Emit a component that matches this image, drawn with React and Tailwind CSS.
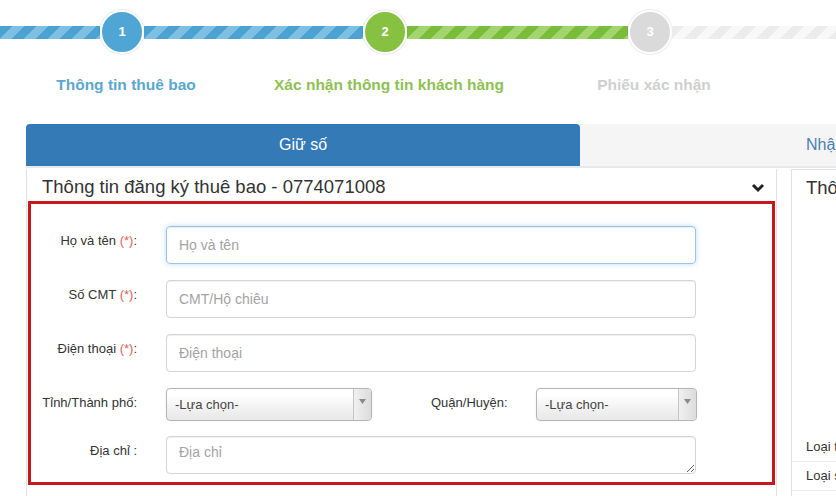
import React from "react";

const STEP_LABELS = [
  { text: "Thông tin thuê bao", w: "w-[252px]", color: "text-[#5aa7cf]" },
  { text: "Xác nhận thông tin khách hàng", w: "w-[274px]", color: "text-[#8dc153]" },
  { text: "Phiếu xác nhận", w: "w-[256px]", color: "text-[#cfcfcf]" },
];

function Bar({ w, tone }) {
  const tones = {
    blue: "bg-[repeating-linear-gradient(135deg,#4ca3d2_0px,#4ca3d2_9px,#7dc0e4_9px,#7dc0e4_17px)]",
    green: "bg-[repeating-linear-gradient(135deg,#79bd3d_0px,#79bd3d_9px,#a3d46d_9px,#a3d46d_17px)]",
    gray: "bg-[repeating-linear-gradient(135deg,#ececec_0px,#ececec_9px,#f8f8f8_9px,#f8f8f8_17px)]",
  };
  return <div className={`${w} h-[13px] shrink-0 ${tones[tone]}`} />;
}

function Dot({ n, cls }) {
  return (
    <div
      className={`w-[44px] h-[44px] shrink-0 rounded-full border-2 border-white shadow-[0_0_0_1px_rgba(0,0,0,0.08)] flex items-center justify-center text-white font-bold text-[13px] ${cls}`}
    >
      {n}
    </div>
  );
}

function Label({ children }) {
  return (
    <div className="w-[106px] shrink-0 text-right pt-[7px] leading-[15px] text-[13px] text-[#333]">
      {children}
    </div>
  );
}

function Req() {
  return <span className="text-[#d9655f]">(*)</span>;
}

function TextInput({ ph, focus }) {
  return (
    <input
      placeholder={ph}
      className={`ml-[29px] w-[530px] h-[38px] rounded-[4px] px-[12px] text-[14px] text-[#555] placeholder:text-[#a3a3a3] outline-none border ${
        focus
          ? "border-[#9cc3e3] shadow-[inset_0_1px_1px_rgba(0,0,0,0.07),0_0_5px_rgba(102,175,233,0.45)]"
          : "border-[#d4d4d4] shadow-[inset_0_1px_1px_rgba(0,0,0,0.06)]"
      }`}
    />
  );
}

function Chosen({ w }) {
  return (
    <div
      className={`${w} h-[33px] flex rounded-[4px] border border-[#b5b5b5] bg-[linear-gradient(#ffffff_20%,#f2f2f2_60%,#e8e8e8)] shadow-[0_0_2px_rgba(0,0,0,0.08)] overflow-hidden`}
    >
      <div className="flex-1 flex items-center pl-[8px] text-[13px] text-[#444]">-Lựa chọn-</div>
      <div className="w-[18px] border-l border-[#c6c6c6] bg-[linear-gradient(90deg,#f0f0f0,#dcdcdc)] flex justify-center pt-[10px]">
        <svg width="7" height="5" viewBox="0 0 7 5">
          <path d="M0 0 L7 0 L3.5 5 Z" fill="#8a8a8a" />
        </svg>
      </div>
    </div>
  );
}

export default function App() {
  return (
    <div className="w-[836px] h-[496px] overflow-hidden bg-white font-['Liberation_Sans',Arial,sans-serif]">
      {/* steps */}
      <div className="h-[64px] flex items-center">
        <Bar w="w-[100px]" tone="blue" />
        <Dot n="1" cls="bg-[#4fa6d4]" />
        <Bar w="w-[219px]" tone="blue" />
        <Dot n="2" cls="bg-[#86c142]" />
        <Bar w="w-[221px]" tone="green" />
        <Dot n="3" cls="bg-[#dadada]" />
        <Bar w="w-[170px]" tone="gray" />
      </div>
      <div className="h-[42px] flex items-center">
        {STEP_LABELS.map((s) => (
          <div key={s.text} className={`${s.w} shrink-0 text-center font-bold text-[15.5px] ${s.color}`}>
            {s.text}
          </div>
        ))}
      </div>

      {/* tabs */}
      <div className="mt-[18px] ml-[26px] flex h-[42px] w-[820px]">
        <div className="w-[554px] shrink-0 bg-[#337ab7] rounded-t-[4px] flex items-center justify-center text-white text-[16px]">
          Giữ số
        </div>
        <div className="flex-1 bg-[#f5f5f5] flex items-center pl-[226px] text-[16px] text-[#4b7fb3] whitespace-nowrap">
          Nhập thông tin
        </div>
      </div>
      <div className="ml-[26px] h-[2px] bg-[#e4eaee]" />

      {/* panels */}
      <div className="ml-[26px] mt-[1px] flex gap-[14px]">
        <div className="w-[751px] shrink-0 border border-[#e2e2e2] border-t-0">
          <div className="h-[32px] flex items-center justify-between pl-[15px] pr-[11px] pt-[4px]">
            <span className="text-[18.5px] text-[#333] leading-none">Thông tin đăng ký thuê bao - 0774071008</span>
            <svg width="14" height="10" viewBox="0 0 14 10" className="mt-[2px]">
              <polyline points="2,2 7,7 12,2" fill="none" stroke="#222" strokeWidth="3" />
            </svg>
          </div>
          <div className="mx-[1px] h-[284px] border-[3px] border-[#c8161d] pt-[22px]">
            <div className="flex items-start">
              <Label>
                Họ và tên <Req />:
              </Label>
              <TextInput ph="Họ và tên" focus />
            </div>
            <div className="flex items-start mt-[16px]">
              <Label>
                Số CMT <Req />:
              </Label>
              <TextInput ph="CMT/Hộ chiêu" />
            </div>
            <div className="flex items-start mt-[16px]">
              <Label>
                Điện thoại <Req />:
              </Label>
              <TextInput ph="Điện thoại" />
            </div>
            <div className="flex items-start mt-[16px]">
              <Label>Tỉnh/Thành phố:</Label>
              <div className="ml-[29px]">
                <Chosen w="w-[206px]" />
              </div>
              <div className="ml-[59px] w-[75px] pt-[7px] leading-[15px] text-[13px] text-[#333]">Quận/Huyện:</div>
              <div className="ml-[30px]">
                <Chosen w="w-[161px]" />
              </div>
            </div>
            <div className="flex items-start mt-[15px]">
              <Label>Địa chỉ :</Label>
              <textarea
                placeholder="Địa chỉ"
                className="ml-[29px] w-[530px] h-[38px] rounded-[4px] border border-[#d4d4d4] shadow-[inset_0_1px_1px_rgba(0,0,0,0.06)] px-[12px] pt-[6px] text-[14px] leading-[18px] placeholder:text-[#a3a3a3] outline-none"
              />
            </div>
          </div>
        </div>

        <div className="w-[300px] shrink-0 h-[330px] border-l border-t border-[#e2e2e2] flex flex-col">
          <div className="h-[32px] flex items-center px-[14px] pt-[4px] text-[18.5px] text-[#333] whitespace-nowrap">
            Thông tin thuê bao
          </div>
          <div className="flex-1" />
          <div className="mb-[8px]">
            <div className="h-[29px] flex items-center px-[14px] text-[13px] text-[#333] border-b border-[#ececec]">Loại thuê bao</div>
            <div className="h-[29px] flex items-center px-[14px] text-[13px] text-[#333] border-b border-[#ececec]">Loại số</div>
          </div>
        </div>
      </div>
    </div>
  );
}
